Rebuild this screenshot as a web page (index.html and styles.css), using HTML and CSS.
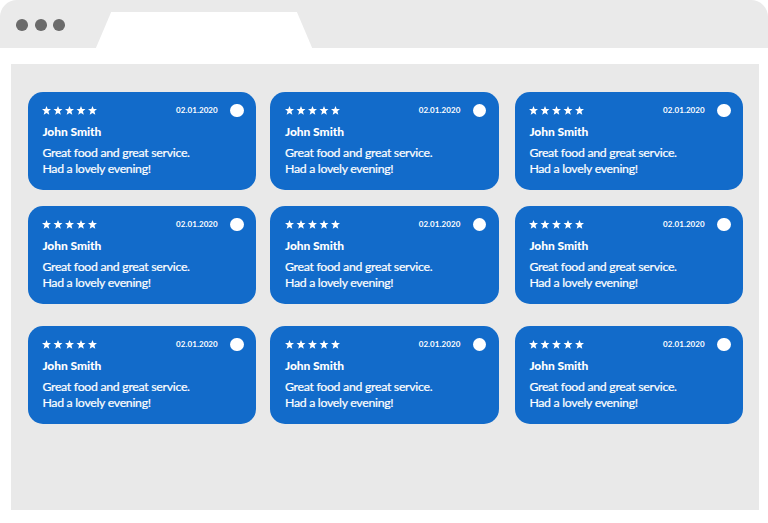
FILE: index.html
```
<!DOCTYPE html>
<html lang="en">
<head>
<meta charset="UTF-8">
<meta name="viewport" content="width=device-width, initial-scale=1.0">
<title>Customer Reviews</title>
<link rel="stylesheet" href="styles.css">
</head>
<body>
<svg class="sprite" aria-hidden="true">
    <symbol id="stars" viewBox="0 0 55 9">
        <path id="star" d="M4.5 0 L5.7 3.1 H9 L6.4 5.3 L7.3 8.7 L4.5 6.9 L1.7 8.7 L2.6 5.3 L0 3.1 H3.3 Z"/>
        <use href="#star" x="11.5"/>
        <use href="#star" x="23"/>
        <use href="#star" x="34.5"/>
        <use href="#star" x="46"/>
    </symbol>
</svg>

<div class="browser">
    <header class="tab-bar">
        <div class="dots"><span></span><span></span><span></span></div>
        <div class="tab"></div>
    </header>

    <main class="reviews"></main>
</div>

<script>
const reviews = document.querySelector('.reviews');

for (let i = 0; i < 9; i++) {
    const card = document.createElement('article');
    card.className = 'card';
    card.innerHTML = `
        <div class="card-top">
            <svg class="stars" role="img" aria-label="5 stars"><use href="#stars"/></svg>
            <time class="date" datetime="2020-01-02">02.01.2020</time>
            <span class="avatar"></span>
        </div>
        <h2 class="name">John Smith</h2>
        <p class="text">Great food and great service.<br>Had a lovely evening!</p>`;
    reviews.appendChild(card);
}
</script>
</body>
</html>
```

FILE: styles.css
```
* { margin: 0; padding: 0; box-sizing: border-box; }
body {
    background: #fff;
    font-family: Lato, sans-serif;
    overflow: hidden;
}
.sprite {
    display: none;
}
.browser {
    width: 768px;
    height: 523px;
    background: #fff;
}
.tab-bar {
    display: flex;
    height: 48.3px;
    padding-left: 16.3px;
    background: #eaeaea;
    border-radius: 17px 17px 0 0;
}
.dots {
    display: flex;
    gap: 6.9px;
    width: 79.5px;
    padding-top: 19.3px;
}
.dots span {
    width: 11.7px;
    height: 11.7px;
    background: #6b6b6b;
    border-radius: 50%;
}
.tab {
    width: 216.5px;
    margin-top: 11.7px;
    background: #fff;
    clip-path: polygon(15.5px 0, 201px 0, 100% 100%, 0 100%);
}
.reviews {
    display: grid;
    grid-template-columns: 242.6px 244.4px 228.8px;
    grid-template-rows: 114px 120px 98.7px;
    align-items: start;
    width: 747.7px;
    height: 445.7px;
    margin: 16px 0 0 11px;
    padding: 27.3px 0 0 16.6px;
    background: #e9e9e9;
}
.card {
    width: 228.8px;
    height: 98.7px;
    padding: 11.8px 12.6px 0 14.8px;
    background: #126bca;
    border-radius: 15px;
    color: #fff;
}
.card-top {
    display: flex;
    align-items: center;
    height: 14px;
}
.stars {
    width: 55px;
    height: 9px;
    margin-top: 1px;
    fill: #fff;
}
.date {
    margin-left: auto;
    font-size: 8px;
    font-weight: 700;
    line-height: 10px;
    letter-spacing: 0.08px;
}
.avatar {
    width: 13.6px;
    height: 13.6px;
    margin-left: 12.4px;
    background: #fff;
    border-radius: 50%;
}
.name {
    margin-top: 6.3px;
    font-size: 12px;
    font-weight: 900;
    line-height: 16px;
    letter-spacing: -0.05px;
}
.text {
    margin-top: 5.7px;
    font-size: 12.3px;
    line-height: 15.5px;
    letter-spacing: -0.29px;
    white-space: nowrap;
    -webkit-text-stroke: 0.2px #fff;
}
```
